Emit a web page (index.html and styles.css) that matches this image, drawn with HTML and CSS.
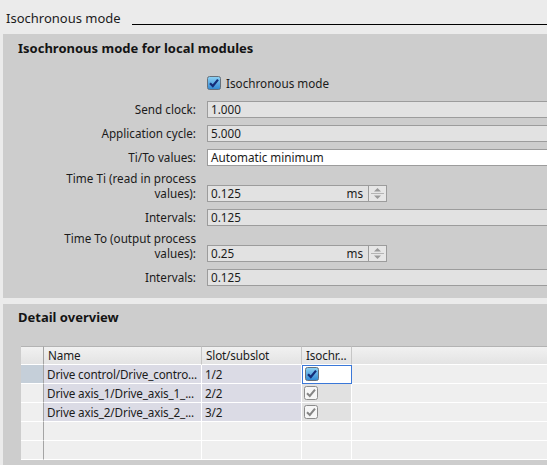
FILE: index.html
```html
<!DOCTYPE html>
<html lang="en">
    <head>
        <meta charset="UTF-8">
        <title>Isochronous mode</title>
        <link rel="stylesheet" href="styles.css">
    </head>
    <body>
        <div class="title_bar">
            <span class="title_text">Isochronous mode</span>
            <span class="title_rule"></span>
        </div>

        <div class="panel panel_local">
            <h2 class="panel_head">Isochronous mode for local modules</h2>

            <div class="check_row">
                <svg class="cb" width="14" height="14" viewBox="0 0 14 14">
                    <defs>
                        <linearGradient id="cbBlue" x1="0" y1="0" x2="0" y2="1">
                            <stop offset="0" stop-color="#8fd3f5"/>
                            <stop offset="1" stop-color="#2f86d2"/>
                        </linearGradient>
                    </defs>
                    <rect x="0.5" y="0.5" width="13" height="13" rx="2" fill="url(#cbBlue)" stroke="#66707a"/>
                    <path d="M3 7.2 L5.8 10 L11 3.6" fill="none" stroke="#142c78" stroke-width="2.2"/>
                </svg>
                <span class="check_label">Isochronous mode</span>
            </div>

            <div class="form_row">
                <label class="form_label">Send clock:</label>
                <div class="field">1.000</div>
            </div>
            <div class="form_row">
                <label class="form_label">Application cycle:</label>
                <div class="field">5.000</div>
            </div>
            <div class="form_row">
                <label class="form_label">Ti/To values:</label>
                <div class="field field_white">Automatic minimum</div>
            </div>
            <div class="form_row form_row_tall">
                <label class="form_label">
                    <span class="label_line">Time Ti (read in process</span>
                    <span class="label_line">values):</span>
                </label>
                <div class="field field_spin">
                    <span class="spin_value">0.125</span>
                    <span class="spin_unit">ms</span>
                    <span class="spin_btns">
                        <svg width="17" height="15" viewBox="0 0 17 15">
                            <path d="M5 5.5 L8.5 2 L12 5.5 Z" fill="#9a9a9a"/>
                            <line x1="2" y1="7.5" x2="15" y2="7.5" stroke="#b4b4b4"/>
                            <path d="M5 9.5 L8.5 13 L12 9.5 Z" fill="#9a9a9a"/>
                        </svg>
                    </span>
                </div>
            </div>
            <div class="form_row">
                <label class="form_label">Intervals:</label>
                <div class="field">0.125</div>
            </div>
            <div class="form_row form_row_tall">
                <label class="form_label">
                    <span class="label_line">Time To (output process</span>
                    <span class="label_line">values):</span>
                </label>
                <div class="field field_spin">
                    <span class="spin_value">0.25</span>
                    <span class="spin_unit">ms</span>
                    <span class="spin_btns">
                        <svg width="17" height="15" viewBox="0 0 17 15">
                            <path d="M5 5.5 L8.5 2 L12 5.5 Z" fill="#9a9a9a"/>
                            <line x1="2" y1="7.5" x2="15" y2="7.5" stroke="#b4b4b4"/>
                            <path d="M5 9.5 L8.5 13 L12 9.5 Z" fill="#9a9a9a"/>
                        </svg>
                    </span>
                </div>
            </div>
            <div class="form_row">
                <label class="form_label">Intervals:</label>
                <div class="field">0.125</div>
            </div>
        </div>

        <div class="panel panel_detail">
            <h2 class="panel_head">Detail overview</h2>

            <div class="grid">
                <div class="hd hd_first"></div>
                <div class="hd">Name</div>
                <div class="hd">Slot/subslot</div>
                <div class="hd">Isochr...</div>
                <div class="hd hd_rest"></div>

                <div class="rh rh_sel"></div>
                <div class="td td_data">Drive control/Drive_contro...</div>
                <div class="td td_data">1/2</div>
                <div class="td td_focus">
                    <svg class="cb" width="14" height="14" viewBox="0 0 14 14">
                        <rect x="0.5" y="0.5" width="13" height="13" rx="2" fill="url(#cbBlue)" stroke="#66707a"/>
                        <path d="M3 7.2 L5.8 10 L11 3.6" fill="none" stroke="#142c78" stroke-width="2.2"/>
                    </svg>
                </div>
                <div class="td"></div>

                <div class="rh"></div>
                <div class="td td_data">Drive axis_1/Drive_axis_1_...</div>
                <div class="td td_data">2/2</div>
                <div class="td td_gray">
                    <svg class="cb" width="14" height="14" viewBox="0 0 14 14">
                        <rect x="0.5" y="0.5" width="13" height="13" rx="2" fill="#f6f6f6" stroke="#8c8c8c"/>
                        <path d="M3 7.2 L5.8 10 L11 3.6" fill="none" stroke="#858585" stroke-width="2"/>
                    </svg>
                </div>
                <div class="td"></div>

                <div class="rh"></div>
                <div class="td td_data">Drive axis_2/Drive_axis_2_...</div>
                <div class="td td_data">3/2</div>
                <div class="td td_gray">
                    <svg class="cb" width="14" height="14" viewBox="0 0 14 14">
                        <rect x="0.5" y="0.5" width="13" height="13" rx="2" fill="#f6f6f6" stroke="#8c8c8c"/>
                        <path d="M3 7.2 L5.8 10 L11 3.6" fill="none" stroke="#858585" stroke-width="2"/>
                    </svg>
                </div>
                <div class="td"></div>

                <div class="rh"></div>
                <div class="td"></div>
                <div class="td"></div>
                <div class="td"></div>
                <div class="td"></div>

                <div class="rh"></div>
                <div class="td"></div>
                <div class="td"></div>
                <div class="td"></div>
                <div class="td"></div>
            </div>
        </div>
    </body>
</html>
```

FILE: styles.css
```css
* {
    margin: 0;
    padding: 0;
    box-sizing: border-box;
}

body {
    background-color: #ebebeb;
    font-family: "Noto Sans", "Open Sans", sans-serif;
    font-size: 11.7px;
    color: #1b1b1b;
    overflow: hidden;
}

/* top title with the long rule */
.title_bar {
    display: flex;
    align-items: flex-start;
    height: 34px;
    padding: 10px 0 0 6px;
}

.title_text {
    font-size: 13px;
    line-height: 17px;
}

.title_rule {
    flex: 1;
    height: 15px;
    margin-left: 11px;
    border-bottom: 1px solid #000;
}

.panel {
    margin-left: 3px;
    background-color: #cdcdcd;
    overflow: hidden;
}

.panel_head {
    font-size: 13px;
    font-weight: bold;
    line-height: 18px;
    padding-left: 15px;
    color: #141414;
}

.panel_local {
    height: 264px;
    padding-top: 5px;
}

.check_row {
    display: flex;
    align-items: center;
    height: 18px;
    margin-top: 17px;
    padding-left: 204px;
}

.cb {
    display: block;
    flex: none;
}

.check_label {
    margin-left: 5px;
    line-height: 15px;
}

.form_row {
    display: flex;
    align-items: flex-end;
    margin-top: 7px;
}

.check_row + .form_row {
    margin-top: 9px;
}

.form_row_tall {
    margin-top: 5px;
}

.form_label {
    flex: none;
    width: 193px;
    text-align: right;
    line-height: 15px;
    padding-bottom: 1px;
}

.label_line {
    display: block;
    height: 15px;
    overflow: visible;
}

.field {
    flex: none;
    width: 360px;
    height: 17px;
    margin-left: 11px;
    padding-left: 3px;
    line-height: 15px;
    background-color: #e2e2e2;
    border: 1px solid #9c9c9c;
    white-space: nowrap;
}

.field_white {
    background-color: #fff;
}

.field_spin {
    display: flex;
    width: 180px;
    padding-left: 0;
}

.spin_value {
    flex: 1;
    padding-left: 3px;
}

.spin_unit {
    padding-right: 5px;
}

.spin_btns {
    width: 18px;
    border-left: 1px solid #9c9c9c;
    background-color: #e6e6e6;
}

.spin_btns svg {
    display: block;
}

/* detail overview table */
.panel_detail {
    margin-top: 6px;
    height: 170px;
    padding-top: 4px;
}

.grid {
    display: grid;
    grid-template-columns: 23px 158px 100px 50px 400px;
    grid-auto-rows: 19px;
    margin: 20px 0 0 18px;
    letter-spacing: -0.15px;
}

.hd {
    line-height: 17px;
    padding-left: 4px;
    background: linear-gradient(#f1f1f1, #e3e3e3);
    border-top: 1px solid #b3b3b3;
    border-right: 1px solid #c6c6c6;
    border-bottom: 1px solid #fff;
    white-space: nowrap;
}

.hd_first {
    border-right: 1px solid #a4a4a4;
}

.hd_rest {
    border-right: none;
}

.rh {
    background-color: #efefef;
    border-right: 1px solid #a4a4a4;
    border-bottom: 1px solid #fff;
}

.rh_sel {
    background-color: #c5cfd9;
}

.td {
    background-color: #efefef;
    border-right: 1px solid #fff;
    border-bottom: 1px solid #fff;
    line-height: 18px;
    padding-left: 3px;
    white-space: nowrap;
    overflow: hidden;
}

.td_data {
    background-color: #dbdbe5;
}

.td_gray {
    background-color: #e1e1e1;
    padding: 2px 0 0 2px;
}

.td_focus {
    background-color: #fff;
    border: 1px solid #3b78d8;
    padding: 1px 0 0 2px;
}
```
